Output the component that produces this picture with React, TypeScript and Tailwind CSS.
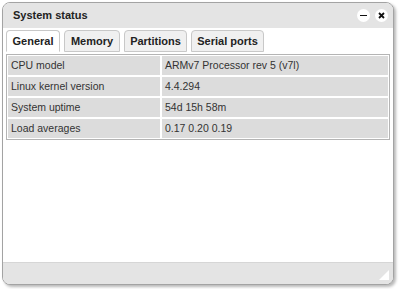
import React, { useState } from "react";

const tabs = [
  { id: "general", label: "General", w: "w-[54px]" },
  { id: "memory", label: "Memory", w: "w-[56px]" },
  { id: "partitions", label: "Partitions", w: "w-[63px]" },
  { id: "serial", label: "Serial ports", w: "w-[73px]" },
];

const rows: [string, string][] = [
  ["CPU model", "ARMv7 Processor rev 5 (v7l)"],
  ["Linux kernel version", "4.4.294"],
  ["System uptime", "54d 15h 58m"],
  ["Load averages", "0.17 0.20 0.19"],
];

const font = { fontFamily: '"Liberation Sans", Arial, sans-serif' };

export default function App() {
  const [active, setActive] = useState("general");

  return (
    <div className="w-[400px] h-[289px] bg-white pt-[2px] pl-[2px] pr-[6px] pb-[4px]" style={font}>
      <div className="h-full flex flex-col rounded-[8px] border border-[#a3a3a3] bg-white overflow-hidden shadow-[2px_2px_3px_rgba(0,0,0,0.28)]">
        {/* title bar */}
        <div className="h-[25px] shrink-0 bg-[#e4e4e4] flex items-center pl-[10px] pr-[5px]">
          <span className="flex-1 text-[11px] font-bold text-[#222]">System status</span>
          <div className="flex gap-[5px]">
            <button className="w-[13px] h-[13px] rounded-full bg-white flex items-center justify-center">
              <span className="block w-[7px] h-[1.5px] bg-[#111]" />
            </button>
            <button className="w-[13px] h-[13px] rounded-full bg-white flex items-center justify-center">
              <svg width="7" height="7" viewBox="0 0 7 7">
                <path d="M1 1L6 6M6 1L1 6" stroke="#111" strokeWidth="1.8" />
              </svg>
            </button>
          </div>
        </div>

        {/* tabs */}
        <div className="h-[24px] shrink-0 flex items-end gap-[4px] pl-[3px] bg-white">
          {tabs.map((t) => (
            <button
              key={t.id}
              onClick={() => setActive(t.id)}
              className={`${t.w} h-[22px] rounded-t-[4px] border border-[#c8c8c8] text-[11px] font-bold text-[#222] flex items-center justify-center ${
                active === t.id ? "bg-white border-b-white" : "bg-[#f0f0f0]"
              }`}
            >
              {t.label}
            </button>
          ))}
        </div>

        {/* content */}
        <div className="flex-1 bg-white px-[3px] pt-[2px]">
          <div className="border border-[#b4b4b4] p-[1px] flex flex-col gap-[2px]">
            {rows.map(([k, v]) => (
              <div key={k} className="flex gap-[2px] h-[19px] text-[10.5px] text-[#333]">
                <div className="w-[152px] bg-[#dcdcdc] flex items-center pl-[3px]">{k}</div>
                <div className="flex-1 bg-[#dcdcdc] flex items-center pl-[3px]">{v}</div>
              </div>
            ))}
          </div>
        </div>

        {/* footer */}
        <div className="h-[22px] shrink-0 bg-[#e4e4e4] border-t border-[#d6d6d6] flex items-end justify-end pr-[4px] pb-[4px]">
          <svg width="10" height="10" viewBox="0 0 10 10">
            <path d="M10 0L10 10L0 10Z" fill="#fff" />
          </svg>
        </div>
      </div>
    </div>
  );
}
